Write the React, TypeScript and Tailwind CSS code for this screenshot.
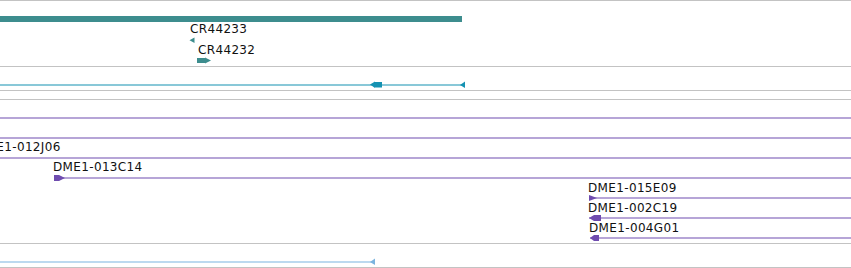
const TEAL = "#3d8d8e";
const CYAN = "#1592b2";
const PURPLE = "#6f4caf";
const SKY = "#7ab4df";

function Label({ x, y, children }: { x: number; y: number; children: string }) {
  // y is the top of a 14px line box; baseline sits ~11px below it
  return (
    <text x={x} y={y + 11} fontSize={12} letterSpacing={0.35} fill="#111" fontFamily="'DejaVu Sans', sans-serif">
      {children}
    </text>
  );
}

function Track({ h, children }: { h: number; children?: React.ReactNode }) {
  return (
    <div className="overflow-hidden border-b border-[#c3c3c3]" style={{ height: h + 1 }}>
      {children && (
        <svg className="block" width={851} height={h}>
          {children}
        </svg>
      )}
    </div>
  );
}

export default function App() {
  return (
    <div className="flex h-[268px] w-[851px] flex-col overflow-hidden border-t border-[#c3c3c3] bg-white font-['DejaVu_Sans',sans-serif]">
      {/* gene track */}
      <Track h={65}>
        <rect x={0} y={15} width={462} height={6} fill={TEAL} />
        <polygon points="194.5,36.5 194.5,42 189.5,39.25" fill={TEAL} />
        <rect x={197} y={57} width={8} height={5} fill={TEAL} />
        <polygon points="205,56.5 211,59.5 205,62.5" fill={TEAL} />
        <Label x={190} y={21}>CR44233</Label>
        <Label x={198} y={42}>CR44232</Label>
      </Track>

      {/* transcript track */}
      <Track h={23}>
        <rect x={0} y={17.5} width={463} height={1} fill={CYAN} />
        <polygon points="370,17.5 375,14.5 375,15 382,15 382,20.5 375,20.5 375,21" fill={CYAN} />
        <polygon points="465,14.5 465,21 460,18" fill={CYAN} />
      </Track>

      <Track h={8} />

      {/* clone track */}
      <Track h={143}>
        <rect x={0} y={17.5} width={851} height={1} fill={PURPLE} />
        <rect x={0} y={37.5} width={851} height={1} fill={PURPLE} />
        <rect x={0} y={57.5} width={851} height={1} fill={PURPLE} />
        <rect x={54} y={77.5} width={797} height={1} fill={PURPLE} />
        <polygon points="54,75 59,75 65,78 59,81 54,81" fill={PURPLE} />
        <rect x={589} y={97.5} width={262} height={1} fill={PURPLE} />
        <polygon points="589,95 597,98 589,101" fill={PURPLE} />
        <rect x={589} y={117.5} width={262} height={1} fill={PURPLE} />
        <polygon points="589,118 594,115 601,115 601,121 594,121" fill={PURPLE} />
        <rect x={590} y={137.5} width={261} height={1} fill={PURPLE} />
        <polygon points="590,138 594,135 599,135 599,141 594,141" fill={PURPLE} />
        <Label x={-24} y={40}>DME1-012J06</Label>
        <Label x={53} y={60}>DME1-013C14</Label>
        <Label x={588} y={81}>DME1-015E09</Label>
        <Label x={588} y={101}>DME1-002C19</Label>
        <Label x={589} y={121}>DME1-004G01</Label>
      </Track>

      {/* EST track */}
      <Track h={23}>
        <rect x={0} y={17.5} width={372} height={1} fill={SKY} />
        <polygon points="375,14.5 375,21 370,18" fill={SKY} />
      </Track>
    </div>
  );
}
